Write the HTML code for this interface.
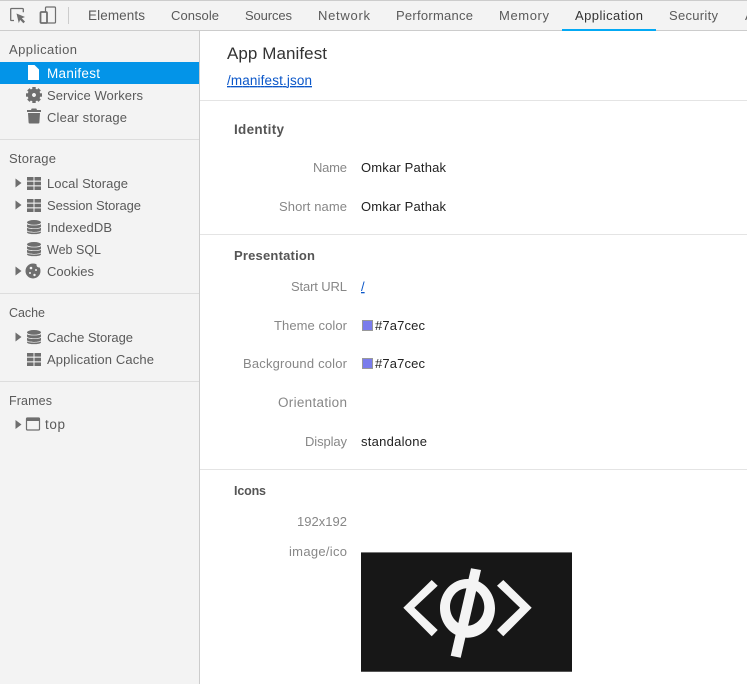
<!DOCTYPE html>
<html><head><meta charset="utf-8"><title>App Manifest</title>
<style>
html,body{margin:0;padding:0;background:#fff;width:747px;height:684px;overflow:hidden}
svg{display:block;font-family:"Liberation Sans",sans-serif;font-size:13px}
.t{fill:#5a5a5a}.l{fill:#878787}.v{fill:#222}.b{font-weight:bold;fill:#555}.k{fill:#0b57c9;text-decoration:underline}
.i{fill:#6e6e6e}.w{font-size:13.5px}.n{font-size:12.5px}
</style></head><body>
<svg width="747" height="684" viewBox="0 0 747 684" xmlns="http://www.w3.org/2000/svg">
<defs>
<g id="grid" class="i"><rect x="0" y="0" width="6.5" height="3.6"/><rect x="7.5" y="0" width="6.5" height="3.6"/><rect x="0" y="4.7" width="6.5" height="3.6"/><rect x="7.5" y="4.7" width="6.5" height="3.6"/><rect x="0" y="9.4" width="6.5" height="3.6"/><rect x="7.5" y="9.4" width="6.5" height="3.6"/></g>
<g id="db" class="i"><ellipse cx="7" cy="2.4" rx="7" ry="2.4"/><path d="M0 4.2c1.5 1.6 12.5 1.6 14 0v2.2c0 2.6-14 2.6-14 0z"/><path d="M0 7.8c1.5 1.6 12.5 1.6 14 0v2.2c0 2.6-14 2.6-14 0z"/><path d="M0 11.4c1.5 1.6 12.5 1.6 14 0v.8c0 2.6-14 2.6-14 0z"/></g>
<path id="arr" d="M0 0l6 4.5L0 9z" fill="#6e6e6e"/>
<rect id="tooth" x="-1.7" y="-8" width="3.4" height="4" fill="#6e6e6e"/>
</defs>

<rect width="747" height="684" fill="#fff"/>
<rect x="0" y="0" width="747" height="30" fill="#f3f3f3"/>
<rect x="0" y="0" width="747" height="1" fill="#ccc"/>
<rect x="0" y="30" width="747" height="1" fill="#ccc"/>
<rect x="0" y="31" width="199" height="653" fill="#f3f3f3"/>
<rect x="199" y="31" width="1" height="653" fill="#ccc"/>

<path d="M14 20.5h-2.5a.8.8 0 0 1-.8-.8V9.3a.8.8 0 0 1 .8-.8h11a.8.8 0 0 1 .8.8v3" fill="none" stroke="#6e6e6e" stroke-width="1.3"/>
<path d="M16.5 13.5l8.5 3.5-3.2 1.3 3.2 3.3-1.6 1.6-3.3-3.3-1.3 3.2z" fill="#6e6e6e"/>
<rect x="45.5" y="7" width="10" height="16" rx="1" fill="none" stroke="#6e6e6e" stroke-width="1.2"/>
<rect x="40.5" y="12" width="6.5" height="11" rx="1" fill="#f3f3f3" stroke="#6e6e6e" stroke-width="1.8"/>
<rect x="68" y="7" width="1" height="17" fill="#ccc"/>

<text class="t w" x="88" y="20" textLength="57">Elements</text>
<text class="t" x="171" y="20" textLength="48">Console</text>
<text class="t" x="245" y="20" textLength="47">Sources</text>
<text class="t" x="318" y="20" textLength="52">Network</text>
<text class="t" x="396" y="20" textLength="77">Performance</text>
<text class="t" x="499" y="20" textLength="50">Memory</text>
<text x="575" y="20" fill="#333" textLength="68">Application</text>
<text class="t" x="669" y="20" textLength="49">Security</text>
<text class="t" x="745" y="20">A</text>
<rect x="562" y="29" width="94" height="2" fill="#03a9f4"/>

<text class="t" x="9" y="54" textLength="68">Application</text>
<rect x="0" y="62" width="199" height="22" fill="#0394e8"/>
<path d="M28 65h6.5l4.500 4.500V80H28z" fill="#fff"/>
<text class="w" x="47" y="78" fill="#fff" textLength="53">Manifest</text>

<g transform="translate(34 95)">
<circle r="4.200" fill="none" stroke="#6e6e6e" stroke-width="4.400"/>
<use href="#tooth"/><use href="#tooth" transform="rotate(45)"/><use href="#tooth" transform="rotate(90)"/><use href="#tooth" transform="rotate(135)"/><use href="#tooth" transform="rotate(180)"/><use href="#tooth" transform="rotate(225)"/><use href="#tooth" transform="rotate(270)"/><use href="#tooth" transform="rotate(315)"/>
</g>
<text class="t" x="47" y="100" textLength="96">Service Workers</text>

<path class="i" d="M27 110h4l.7-1.500h4.600l.7 1.500h4v2H27zM28 113h12l-.6 9.500a1 1 0 0 1-1 1h-8.800a1 1 0 0 1-1-1z"/>
<text class="t" x="47" y="122" textLength="80">Clear storage</text>

<rect x="0" y="139" width="199" height="1" fill="#ddd"/>
<text class="t" x="9" y="163" textLength="47">Storage</text>
<use href="#arr" x="15.500" y="178.500"/><use href="#grid" x="27" y="177"/>
<text class="t" x="47" y="188" textLength="81">Local Storage</text>
<use href="#arr" x="15.500" y="200.500"/><use href="#grid" x="27" y="199"/>
<text class="t" x="47" y="210" textLength="94">Session Storage</text>
<use href="#db" x="27" y="220"/>
<text class="t" x="47" y="232" textLength="65">IndexedDB</text>
<use href="#db" x="27" y="242"/>
<text class="t n" x="47" y="254" textLength="54">Web SQL</text>
<use href="#arr" x="15.500" y="266.500"/>
<circle cx="33" cy="271" r="7.500" fill="#6e6e6e"/>
<g fill="#f3f3f3"><circle cx="31" cy="268" r="1.300"/><circle cx="36" cy="270" r="1"/><circle cx="30" cy="273" r="1"/><circle cx="34.500" cy="275" r="1.200"/><circle cx="39" cy="265" r="2.500"/></g>
<text class="t" x="47" y="276" textLength="47">Cookies</text>

<rect x="0" y="293" width="199" height="1" fill="#ddd"/>
<text class="t n" x="9" y="317" textLength="36">Cache</text>
<use href="#arr" x="15.500" y="332.500"/><use href="#db" x="27" y="330"/>
<text class="t" x="47" y="342" textLength="86">Cache Storage</text>
<use href="#grid" x="27" y="353"/>
<text class="t" x="47" y="364" textLength="107">Application Cache</text>

<rect x="0" y="381" width="199" height="1" fill="#ddd"/>
<text class="t n" x="9" y="405" textLength="43">Frames</text>
<use href="#arr" x="15.500" y="420"/>
<rect x="26.500" y="418" width="13" height="12" rx="1" fill="none" stroke="#6e6e6e" stroke-width="1.200"/>
<rect x="26.500" y="418" width="13" height="3" fill="#6e6e6e"/>
<text class="t w" x="45" y="429" textLength="20">top</text>

<text x="227" y="59" fill="#333" font-size="17" textLength="100">App Manifest</text>
<text class="k w" x="227" y="85" textLength="85">/manifest.json</text>
<rect x="200" y="100" width="547" height="1" fill="#e4e4e4"/>

<text class="b w" x="234" y="134" textLength="50">Identity</text>
<text class="l" x="313" y="172" textLength="34">Name</text>
<text class="v" x="361" y="172" textLength="85">Omkar Pathak</text>
<text class="l" x="279" y="211" textLength="68">Short name</text>
<text class="v" x="361" y="211" textLength="85">Omkar Pathak</text>
<rect x="200" y="234" width="547" height="1" fill="#e4e4e4"/>

<text class="b" x="234" y="260" textLength="81">Presentation</text>
<text class="l" x="291" y="291" textLength="56">Start URL</text>
<text class="k" x="361" y="291">/</text>
<text class="l" x="274" y="330" textLength="73">Theme color</text>
<rect x="362.500" y="320.500" width="10" height="10" fill="#7a7cec" stroke="#999" stroke-width="1"/>
<text class="v" x="375" y="330" textLength="50">#7a7cec</text>
<text class="l" x="243" y="368" textLength="104">Background color</text>
<rect x="362.500" y="358.500" width="10" height="10" fill="#7a7cec" stroke="#999" stroke-width="1"/>
<text class="v" x="375" y="368" textLength="50">#7a7cec</text>
<text class="l w" x="278" y="407" textLength="69">Orientation</text>
<text class="l" x="305" y="446" textLength="42">Display</text>
<text class="v" x="361" y="446" textLength="66">standalone</text>
<rect x="200" y="469" width="547" height="1" fill="#e4e4e4"/>

<text class="b n" x="234" y="495" textLength="32">Icons</text>
<text class="l" x="297" y="526" textLength="50">192x192</text>
<text class="l" x="289" y="556" textLength="58">image/ico</text>

<rect x="361" y="552" width="211" height="120" fill="#171717"/>
<rect x="361" y="552" width="211" height="1" fill="#777"/>
<rect x="361" y="671" width="211" height="1" fill="#555"/>
<path fill="#f4f4f4" d="M403.300 607.700L431.700 580l6 5.700-23.400 22 23.400 22.300-6 6.300z"/>
<path fill="#f4f4f4" d="M531.700 607.700L503.300 580l-6.300 5.700 23 22-23 22.300 6.300 6.300z"/>
<path fill="#f4f4f4" fill-rule="evenodd" d="M467.500 579c15.200 0 27.500 13 27.500 29.300s-12.300 29.400-27.500 29.400-27.500-13.100-27.500-29.400 12.300-29.300 27.500-29.300zM467.200 588.300c-9.400 0-17.200 8.500-17.200 18.700s7.800 18.700 17.200 18.700 17.100-8.500 17.100-18.700-7.700-18.700-17.100-18.700z"/>
<path fill="#f4f4f4" d="M471 568.300l10 1.700-20.300 87.700-10-2z"/>
</svg>
</body></html>
